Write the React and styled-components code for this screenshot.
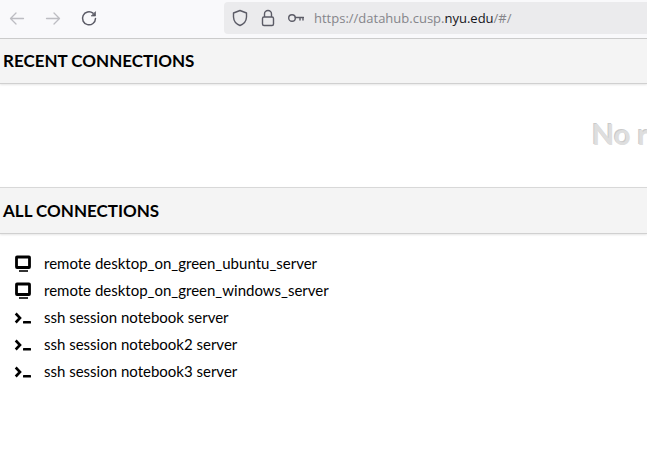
import React from "react";
import styled, { createGlobalStyle } from "styled-components";

const GlobalStyle = createGlobalStyle`
  *, *::before, *::after { box-sizing: border-box; }
  body { margin: 0; background: #fff; color: #000; font-family: Lato, "Liberation Sans", sans-serif; overflow-x: hidden; }
`;

const Toolbar = styled.header`
  display: flex;
  align-items: center;
  height: 39px;
  padding: 0 0 2px 8px;
  background: #f9f9fb;
  border-bottom: 1px solid #ccc;
`;

const NavButtons = styled.nav`
  display: flex;
  flex: none;
  gap: 18px;
  width: 216px;
`;

const NavButton = styled.button`
  display: flex;
  width: 18px;
  height: 18px;
  padding: 0;
  border: 0;
  background: none;
  color: #5b5b66;

  &:disabled { color: #bdbdc2; }
`;

const AddressBar = styled.div`
  display: flex;
  flex: 1;
  align-items: center;
  gap: 12px;
  min-width: 0;
  height: 32px;
  padding-left: 8px;
  border-radius: 4px 0 0 4px;
  background: #ebebed;
  color: #5b5b66;
`;

const Url = styled.div`
  margin-left: -2px;
  color: #85858a;
  font: 13px/20px "Open Sans", "Noto Sans", sans-serif;
  white-space: nowrap;
`;

const Domain = styled.span`
  color: #15141a;
`;

const Icon = styled.svg.attrs({ fill: "none", stroke: "currentColor", "aria-hidden": true })`
  display: block;
  flex: none;
`;

const SectionHeader = styled.div`
  padding: 0 3px;
  background: #f4f4f4;
  border-top: ${(p) => (p.$ruled ? "1px solid #d8d8d8" : "0")};
  border-bottom: 1px solid #d0d0d0;
  box-shadow: 0 1px 2px rgba(0, 0, 0, 0.1);
`;

const SectionTitle = styled.h2`
  margin: 0;
  font-size: 17px;
  font-weight: 700;
  line-height: ${(p) => p.$height}px;
  text-transform: uppercase;
`;

const RecentArea = styled.div`
  padding: 30px 0 33px 592px;
  overflow: hidden;
`;

const Placeholder = styled.p`
  margin: 0;
  color: #dedede;
  font-size: 29px;
  font-weight: 700;
  line-height: 40px;
  text-shadow: -1px -1px 0 #cacaca;
  white-space: nowrap;
`;

const ConnectionList = styled.ul`
  display: grid;
  margin: 0;
  padding: 16px 14px;
  list-style: none;
`;

const ConnectionLink = styled.a`
  display: flex;
  align-items: center;
  gap: 12px;
  height: 27px;
  color: #000;
  font-size: 15px;
  line-height: 27px;
  text-decoration: none;
  white-space: nowrap;
`;

const BackIcon = () => (
  <Icon width="18" height="18" strokeWidth="1.3" strokeLinecap="round" strokeLinejoin="round">
    <path d="M2.5 9.500h13M8 4L2.500 9.500L8 15" />
  </Icon>
);

const ForwardIcon = () => (
  <Icon width="18" height="18" strokeWidth="1.3" strokeLinecap="round" strokeLinejoin="round">
    <path d="M2.500 9.500h13M10 4l5.500 5.500L10 15" />
  </Icon>
);

const ReloadIcon = () => (
  <Icon width="18" height="18" strokeWidth="1.500" strokeLinecap="round">
    <path d="M13 4.200A6.500 6.500 0 1 0 15.500 9.500" />
    <path d="M15.500 3v4h-4z" fill="currentColor" strokeWidth="0.700" />
  </Icon>
);

const ShieldIcon = () => (
  <Icon width="16" height="18" strokeWidth="1.400" strokeLinejoin="round">
    <path d="M8 1.500L14.500 4V8C14.300 12 12 15 8 16.500C4 15 1.700 12 1.500 8V4Z" />
  </Icon>
);

const LockIcon = () => (
  <Icon width="16" height="18" strokeWidth="1.400">
    <rect x="2.500" y="8" width="11" height="8.500" rx="1.500" />
    <path d="M4.500 8V5a3.500 3.500 0 0 1 7 0v3" />
  </Icon>
);

const KeyIcon = () => (
  <Icon width="16" height="18" strokeWidth="1.400" strokeLinecap="round">
    <circle cx="4" cy="9" r="3.300" />
    <path d="M7.300 8.500h8.200M12 8.500v2.500M15 8.500v2.500" />
  </Icon>
);

const DesktopIcon = () => (
  <Icon width="18" height="18">
    <rect x="2.500" y="2" width="13" height="10.500" rx="0.500" strokeWidth="2.800" />
    <path d="M5 16h9" strokeWidth="1.600" />
  </Icon>
);

const TerminalIcon = () => (
  <Icon width="18" height="18">
    <path d="M1.700 4.500L6 9L1.700 13.500" strokeWidth="2.600" />
    <rect x="9" y="12" width="8" height="2.500" rx="0.500" fill="currentColor" stroke="none" />
  </Icon>
);

const connections = [
  { name: "remote desktop_on_green_ubuntu_server", icon: DesktopIcon },
  { name: "remote desktop_on_green_windows_server", icon: DesktopIcon },
  { name: "ssh session notebook server", icon: TerminalIcon },
  { name: "ssh session notebook2 server", icon: TerminalIcon },
  { name: "ssh session notebook3 server", icon: TerminalIcon },
];

export default function App() {
  return (
    <>
      <GlobalStyle />
      <Toolbar>
        <NavButtons aria-label="Browser navigation">
          <NavButton disabled aria-label="Back"><BackIcon /></NavButton>
          <NavButton disabled aria-label="Forward"><ForwardIcon /></NavButton>
          <NavButton aria-label="Reload"><ReloadIcon /></NavButton>
        </NavButtons>
        <AddressBar>
          <ShieldIcon />
          <LockIcon />
          <KeyIcon />
          <Url>https://datahub.cusp.<Domain>nyu.edu</Domain>/#/</Url>
        </AddressBar>
      </Toolbar>
      <main>
        <section>
          <SectionHeader><SectionTitle $height={44}>Recent Connections</SectionTitle></SectionHeader>
          <RecentArea><Placeholder>No recent connections.</Placeholder></RecentArea>
        </section>
        <section>
          <SectionHeader $ruled><SectionTitle $height={45}>All Connections</SectionTitle></SectionHeader>
          <ConnectionList>
            {connections.map(({ name, icon: Glyph }) => (
              <li key={name}>
                <ConnectionLink href="#/"><Glyph />{name}</ConnectionLink>
              </li>
            ))}
          </ConnectionList>
        </section>
      </main>
    </>
  );
}
